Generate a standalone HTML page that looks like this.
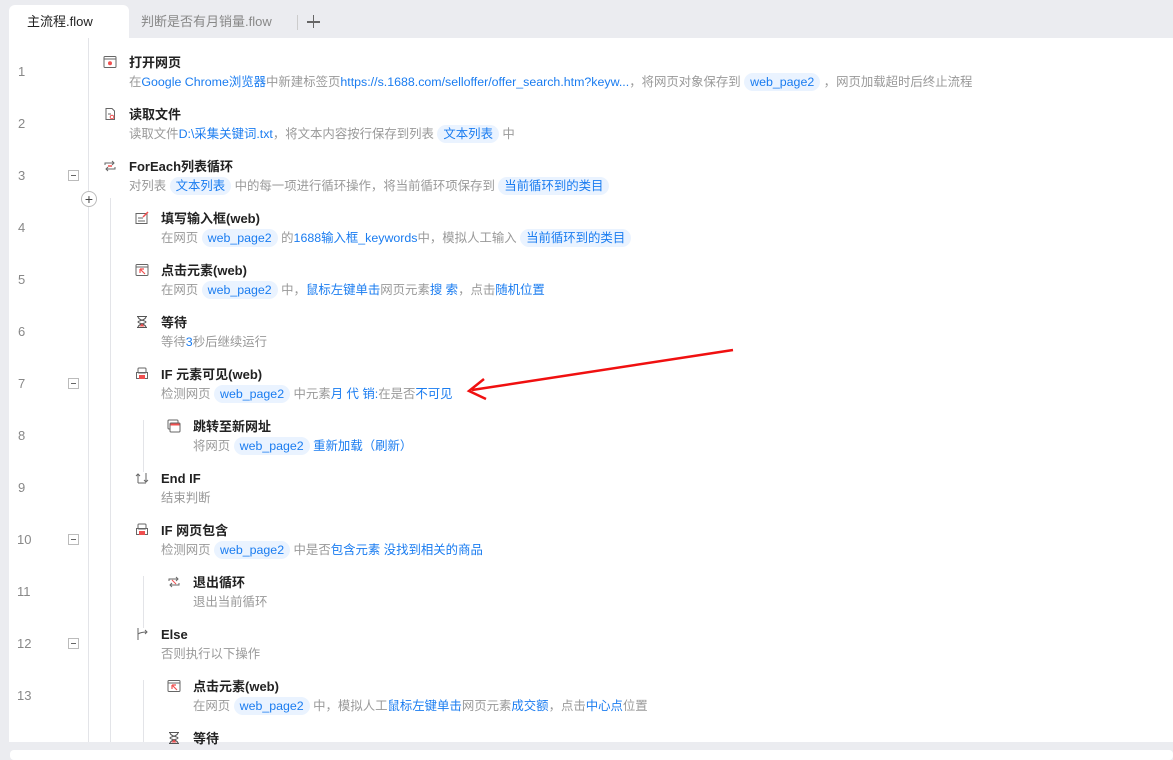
<!DOCTYPE html><html><head><meta charset="utf-8"><style>
body{margin:0;width:1173px;height:754px;background:#ebecf0;font-family:"Liberation Sans","Noto Sans CJK SC",sans-serif;position:relative;overflow:hidden}
.tab{position:absolute;top:5px;height:33px;line-height:33px;font-size:13px}
#main{position:absolute;left:9px;top:38px;width:1164px;height:704px;background:#fff;overflow:hidden}
.ln{position:absolute;left:9px;font-size:13px;color:#888}
.mb{position:absolute;left:59px;width:11px;height:11px;border:1px solid #bbb;box-sizing:border-box}
.mb:after{content:"";position:absolute;left:2px;top:4px;width:5px;height:1px;background:#666}
.vl{position:absolute;width:1px;background:#e3e4e8}
.t{position:absolute;font-size:13px;font-weight:bold;color:#222;white-space:nowrap;line-height:19px}
.d{position:absolute;font-size:12.4px;color:#999;white-space:nowrap;line-height:19px}
.b{color:#1a7cf0}
.c{color:#1a7cf0;background:#eaf3ff;border-radius:10px;padding:2px 6px}
.ic{position:absolute;width:14px;height:14px}
</style></head><body>
<div class="tab" style="left:9px;width:120px;background:#fff;border-radius:6px 6px 0 0;padding-left:18px;box-sizing:border-box;color:#222">主流程.flow</div>
<div class="tab" style="left:141px;color:#888">判断是否有月销量.flow</div>
<div style="position:absolute;left:297px;top:15px;width:1px;height:15px;background:#ccc"></div>
<div style="position:absolute;left:307px;top:21px;width:13px;height:1.5px;background:#666"></div>
<div style="position:absolute;left:312.5px;top:15px;width:1.5px;height:13px;background:#666"></div>
<div id="main">
<div class="vl" style="left:79px;top:0;height:704px"></div>
<div class="vl" style="left:101px;top:160px;height:544px"></div>
<div class="vl" style="left:134px;top:382px;height:52px"></div>
<div class="vl" style="left:134px;top:538px;height:52px"></div>
<div class="vl" style="left:134px;top:642px;height:62px"></div>
<div style="position:absolute;left:72px;top:153px;width:16px;height:16px;border:1px solid #bbb;border-radius:50%;background:#fff;text-align:center;line-height:15px;font-size:14px;color:#444;box-sizing:border-box">+</div>
</div>
<div style="position:absolute;left:10px;top:750px;width:1163px;height:10px;background:#fff;border-radius:4px"></div>
<div id="rows"></div>
<svg style="position:absolute;left:0;top:0" width="1173" height="754"><line x1="733" y1="350" x2="472" y2="390" stroke="#f01010" stroke-width="2.5"/><polyline points="484,379 469,391 486,399" fill="none" stroke="#f01010" stroke-width="2.5"/></svg>
<script>
const W='<rect x="1" y="1.5" width="12" height="11" rx="1" fill="none" stroke="#666"/><line x1="1" y1="4" x2="13" y2="4" stroke="#666"/>';
const I={
web:W+'<circle cx="7" cy="8.2" r="2" fill="#f05050"/>',
file:'<path d="M3 1.5h6l2.5 2.5v8.5h-8.5z" fill="none" stroke="#666"/><circle cx="9" cy="10" r="1.8" fill="none" stroke="#f05050"/><line x1="5" y1="7" x2="8" y2="7" stroke="#666"/>',
loop:'<path d="M2 6V4h9M9 2l2 2-2 2M12 8v2H3M5 8l-2 2 2 2" fill="none" stroke="#666"/><line x1="5" y1="7" x2="9" y2="7" stroke="#f05050" stroke-width="1.5"/>',
edit:'<rect x="1" y="2.5" width="11" height="10" fill="none" stroke="#666"/><line x1="3" y1="7" x2="8" y2="7" stroke="#666"/><line x1="3" y1="10" x2="10" y2="10" stroke="#666"/><path d="M8 6l5-5" stroke="#f05050" stroke-width="1.5"/>',
click:W+'<path d="M5 6l5 5M5 6v4M5 6h4" stroke="#f05050" stroke-width="1.2" fill="none"/>',
wait:'<path d="M2 1.5h10M2 12.5h10M3 1.5c0 4 8 4 8 5.5s-8 1.5-8 5.5M11 1.5c0 4-8 4-8 5.5s8 1.5 8 5.5" fill="none" stroke="#555"/><path d="M4.5 11.5l2.5-3 2.5 3z" fill="#f05050"/>',
iff:'<rect x="3" y="1" width="8" height="5" rx="1" fill="none" stroke="#666"/><rect x="1.5" y="5.5" width="11" height="6" fill="none" stroke="#666"/><rect x="4" y="8" width="6" height="4" fill="#f05050"/>',
jump:'<rect x="1" y="1" width="10" height="9" rx="1" fill="none" stroke="#666"/><rect x="3" y="4" width="10" height="9" rx="1" fill="#fff" stroke="#666"/><rect x="3.5" y="4.5" width="9" height="2" fill="#f05050"/>',
endif:'<path d="M3 12V3M1 5l2-2 2 2M11 2v9M9 9l2 2 2-2M3 12h8" fill="none" stroke="#666"/>',
els:'<path d="M3 1v12M3 7c3-2 6-2 9-2M10 3l2 2-2 2" fill="none" stroke="#666"/>',
brk:'<path d="M2 6V4h9M9 2l2 2-2 2M12 8v2H3M5 8l-2 2 2 2" fill="none" stroke="#666"/><path d="M5 5l4 4" stroke="#f05050"/>'};
const R=[
[0,"打开网页",'在<span class=b>Google Chrome浏览器</span>中新建标签页<span class=b>https://s.1688.com/selloffer/offer_search.htm?keyw...</span>，将网页对象保存到 <span class=c>web_page2</span> ，网页加载超时后终止流程',0,'web'],
[0,"读取文件",'读取文件<span class=b>D:\\采集关键词.txt</span>，将文本内容按行保存到列表 <span class=c>文本列表</span> 中',0,'file'],
[0,"ForEach列表循环",'对列表 <span class=c>文本列表</span> 中的每一项进行循环操作，将当前循环项保存到 <span class=c>当前循环到的类目</span>',1,'loop'],
[1,"填写输入框(web)",'在网页 <span class=c>web_page2</span> 的<span class=b>1688输入框_keywords</span>中，模拟人工输入 <span class=c>当前循环到的类目</span>',0,'edit'],
[1,"点击元素(web)",'在网页 <span class=c>web_page2</span> 中，<span class=b>鼠标左键单击</span>网页元素<span class=b>搜 索</span>，点击<span class=b>随机位置</span>',0,'click'],
[1,"等待",'等待<span class=b>3</span>秒后继续运行',0,'wait'],
[1,"IF 元素可见(web)",'检测网页 <span class=c>web_page2</span> 中元素<span class=b>月 代 销:</span>在是否<span class=b>不可见</span>',1,'iff'],
[2,"跳转至新网址",'将网页 <span class=c>web_page2</span> <span class=b>重新加载（刷新）</span>',0,'jump'],
[1,"End IF",'结束判断',0,'endif'],
[1,"IF 网页包含",'检测网页 <span class=c>web_page2</span> 中是否<span class=b>包含元素 没找到相关的商品</span>',1,'iff'],
[2,"退出循环",'退出当前循环',0,'brk'],
[1,"Else",'否则执行以下操作',1,'els'],
[2,"点击元素(web)",'在网页 <span class=c>web_page2</span> 中，模拟人工<span class=b>鼠标左键单击</span>网页元素<span class=b>成交额</span>，点击<span class=b>中心点</span>位置',0,'click'],
[2,"等待",'',0,'wait']];
let h='';
R.forEach((r,i)=>{const y=53+52*i;const x=129+32*r[0];
if(i<13){h+=`<div class=ln style="top:${54+52*i+10}px;left:${i<9?18:17}px">${i+1}</div>`;if(r[3])h+=`<div class=mb style="left:68px;top:${54+52*i+12}px"></div>`;}
h+=`<svg class=ic style="left:${x-26}px;top:${y+2}px" viewBox="0 0 14 14">${I[r[4]]}</svg>`;
h+=`<div class=t style="left:${x}px;top:${y}px">${r[1]}</div><div class=d style="left:${x}px;top:${y+20}px">${r[2]}</div>`;});
document.getElementById('rows').innerHTML=h;
</script>
</body></html>
